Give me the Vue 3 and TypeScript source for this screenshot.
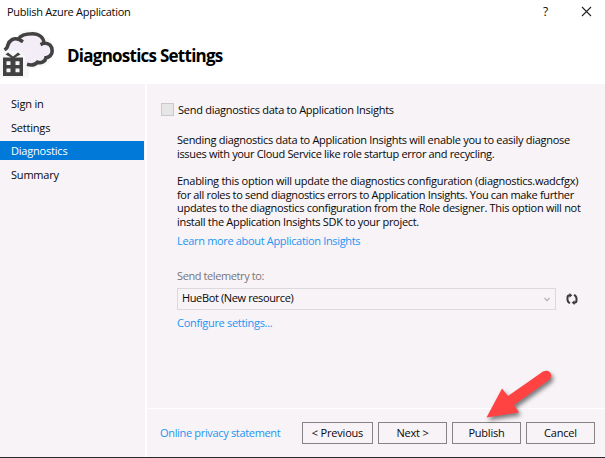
<script setup lang="ts">
import { ref } from 'vue'

const steps: string[] = ['Sign in', 'Settings', 'Diagnostics', 'Summary']
const current = ref<string>('Diagnostics')

const intro: string[] = [
  'Sending diagnostics data to Application Insights will enable you to easily diagnose',
  'issues with your Cloud Service like role startup error and recycling.',
]
const details: string[] = [
  'Enabling this option will update the diagnostics configuration (diagnostics.wadcfgx)',
  'for all roles to send diagnostics errors to Application Insights. You can make further',
  'updates to the diagnostics configuration from the Role designer. This option will not',
  'install the Application Insights SDK to your project.',
]
</script>

<template>
  <div class="dialog">
    <header class="head">
      <div class="titlebar">
        <span class="caption">Publish Azure Application</span>
        <span class="help">?</span>
        <svg class="close" width="11" height="11" viewBox="0 0 11 11">
          <path d="M1 1L10 10M10 1L1 10" fill="none" stroke="#222" stroke-width="1.1" />
        </svg>
      </div>
      <div class="banner">
        <svg class="cloud" width="58" height="56" viewBox="0 0 58 56">
          <path
            d="M8 24C5 19 10 12 18 13C23 5 37 4 43 14C51 14 55 24 49 33C47 39 41 40 38 39C34 42 29 42 27 41V51H2V26Z"
            fill="#f7f7f7" stroke="#f7f7f7" stroke-width="4" stroke-linejoin="round"
          />
          <path
            d="M5.500 24.500C6.500 18 12 13.500 18 14.500C20.500 10 26 8.500 32.500 8.500C38.500 8.500 43 12 44 18C49.500 18 52.500 21 52.500 26C52.500 30 49.500 33 46 33C45 37.500 41 39 37.500 37.500C35 41 31 41 27 39.500L22 27L8 25Z"
            fill="#f3edf7"
          />
          <path
            d="M4.500 24.800C8 23 7.300 21.500 8 19.800C9.500 14.800 14 12.700 18.500 14.200L23 16.800M18.500 14.200C20.500 10.500 26 8.800 32.500 8.800C39 8.800 43.500 12.500 44 18L40.500 19.700M44 18C49 18 52.200 21 52.200 26C52.200 29.500 49.500 32.500 46 32.700C45.500 36.500 41 38.500 37.500 37.200C35 40 31 40.500 27 39.300"
            fill="none" stroke="#424242" stroke-width="3.600"
          />
          <path d="M1 30H7L4 26H10L13 29L16 26H21L18 30H25V51H1Z" fill="#f7f7f7" />
          <path
            fill-rule="evenodd"
            d="M3 32.500H11L5.500 29.500L8 27.500L13 31.500L18 27.500L20.500 29.500L15 32.500H23V51H3ZM6.500 36.200V40H10.500V36.200ZM15.500 36.200V40H19.500V36.200ZM6.500 43.500V47.300H10.500V43.500ZM15.500 43.500V47.300H19.500V43.500Z"
            fill="#424242"
          />
        </svg>
        <h1 class="title">Diagnostics Settings</h1>
      </div>
    </header>

    <div class="body">
      <nav class="steps">
        <a
          v-for="step in steps"
          :key="step"
          class="step"
          :class="{ active: step === current }"
          @click="current = step"
        >{{ step }}</a>
      </nav>

      <main class="main">
        <section class="content">
          <div class="check-row">
            <span class="checkbox"></span>
            <span class="check-label">Send diagnostics data to Application Insights</span>
          </div>
          <div class="indent">
            <p class="para">
              <span v-for="(line, i) in intro" :key="i" class="line" :class="'intro-' + i">{{ line }}</span>
            </p>
            <p class="para">
              <span v-for="(line, i) in details" :key="i" class="line" :class="'details-' + i">{{ line }}</span>
            </p>
            <a class="link learn">Learn more about Application Insights</a>
            <label class="field-label">Send telemetry to:</label>
            <div class="select-row">
              <div class="select">
                <span class="value">HueBot (New resource)</span>
                <svg width="6" height="5" viewBox="0 0 6 5">
                  <path d="M.5 1L3 3.700L5.500 1" fill="none" stroke="#b9b6ba" stroke-width="1.300" />
                </svg>
              </div>
              <svg class="refresh" width="12" height="12" viewBox="0 0 12 12">
                <g fill="none" stroke="#3c3c3c" stroke-width="2">
                  <path d="M4 10.200Q1.500 9 1.500 6.500V4.500Q1.500 2.200 4 2.200" />
                  <path d="M8 1.800Q10.500 3 10.500 5.500V7.500Q10.500 9.800 8 9.800" />
                </g>
                <path d="M3.500 0L6.300 2.300L3.500 4.800ZM8.500 12L5.700 9.700L8.500 7.200Z" fill="#3c3c3c" />
              </svg>
            </div>
            <a class="link configure">Configure settings...</a>
          </div>
        </section>

        <footer class="footer">
          <a class="link privacy">Online privacy statement</a>
          <button class="btn previous">&lt; Previous</button>
          <button class="btn next">Next &gt;</button>
          <button class="btn publish">Publish</button>
          <button class="btn cancel">Cancel</button>
        </footer>
      </main>
    </div>

    <svg class="pointer" width="90" height="70" viewBox="0 0 90 70">
      <path
        d="M6.500 52.500L22 23.500L28 31L63 6.500C70 3 74 11 69 15L34 40L39 47.500Z"
        fill="#ff4343"
      />
    </svg>
  </div>
</template>

<style>
body {
  margin: 0;
  overflow: hidden;
}
</style>

<style scoped>
.dialog {
  position: relative;
  box-sizing: border-box;
  width: 605px;
  height: 458px;
  display: flex;
  flex-direction: column;
  background: #fff;
  border-bottom: 1px solid #29282a;
  font-family: "Open Sans", "Noto Sans", sans-serif;
  font-size: 11px;
  letter-spacing: -0.3px;
  color: #080808;
  overflow: hidden;
}
.head {
  height: 84px;
  flex: none;
}
.titlebar {
  height: 23px;
  display: flex;
  align-items: center;
  padding: 0 13px 0 7px;
}
.caption {
  flex: 1;
  letter-spacing: -0.27px;
}
.help {
  font-size: 12px;
  margin-right: 33px;
}
.banner {
  height: 61px;
  display: flex;
}
.cloud {
  margin-top: 2px;
}
.title {
  margin: 19px 0 0 9px;
  font-size: 17px;
  line-height: 28px;
  font-weight: 700;
  letter-spacing: -0.75px;
  color: #000;
}
.body {
  flex: 1;
  display: flex;
  gap: 2px;
  min-height: 0;
}
.steps {
  width: 145px;
  box-sizing: border-box;
  padding-top: 10px;
  background: #f7f3f7;
}
.step {
  display: block;
  box-sizing: border-box;
  width: 144px;
  height: 19px;
  line-height: 18px;
  margin-bottom: 4.7px;
  padding: 1px 0 0 11px;
  letter-spacing: -0.2px;
}
.step.active {
  background: #0079d8;
  color: #fff;
}
.main {
  flex: 1;
  display: flex;
  flex-direction: column;
  gap: 1px;
}
.content {
  height: 324px;
  box-sizing: border-box;
  padding: 18px 0 0 14px;
  background: #f7f3f7;
}
.check-row {
  display: flex;
  align-items: center;
  height: 14px;
}
.check-label {
  letter-spacing: -0.27px;
}
.checkbox {
  box-sizing: border-box;
  width: 13px;
  height: 13px;
  border: 1px solid #c9c8ca;
  background: #e6e6e6;
  margin-right: 4px;
}
.indent {
  padding: 17px 0 0 16px;
}
.para {
  margin: 0 0 13.660px;
  line-height: 13.660px;
}
.line {
  display: block;
  white-space: nowrap;
}
.intro-0 {
  letter-spacing: -0.285px;
}
.intro-1 {
  letter-spacing: -0.33px;
}
.details-0 {
  letter-spacing: -0.27px;
}
.details-1 {
  letter-spacing: -0.34px;
}
.link {
  color: #2196f3;
}
.learn,
.configure {
  display: block;
  line-height: 14px;
}
.learn {
  margin-top: -8px;
  letter-spacing: -0.33px;
}
.field-label {
  display: block;
  line-height: 14px;
  margin-top: 21px;
  color: #777579;
  letter-spacing: -0.4px;
}
.select-row {
  display: flex;
  align-items: center;
  margin: 5px 0 6px;
}
.select {
  box-sizing: border-box;
  width: 379px;
  height: 22px;
  border: 1px solid #dcd9de;
  display: flex;
  align-items: center;
  justify-content: space-between;
  padding: 0 5px 0 4px;
}
.value {
  letter-spacing: -0.37px;
  line-height: 18px;
  padding-bottom: 2px;
}
.refresh {
  margin-left: 10px;
}
.footer {
  flex: 1;
  display: flex;
  align-items: flex-start;
  padding: 13px 0 0 13px;
  background: #f7f3f7;
}
.privacy {
  line-height: 22px;
  width: 142px;
  white-space: nowrap;
  letter-spacing: -0.33px;
}
.btn {
  box-sizing: border-box;
  width: 69px;
  height: 22px;
  margin: 0 5px 0 0;
  padding: 0;
  border: 1px solid #858386;
  background: #f7f3f7;
  font: inherit;
  letter-spacing: -0.2px;
  line-height: 20px;
  color: #080808;
}
.previous {
  width: 71px;
}
.pointer {
  position: absolute;
  left: 480px;
  top: 365px;
  filter: drop-shadow(2px 3px 2px rgba(0, 0, 0, 0.5));
}
</style>
